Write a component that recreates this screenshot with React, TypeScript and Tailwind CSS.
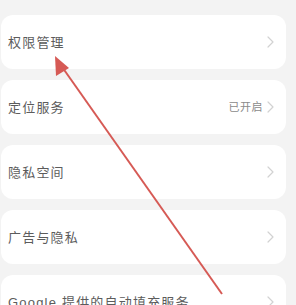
const rows: { label: string; value?: string }[] = [
  { label: '权限管理' },
  { label: '定位服务', value: '已开启' },
  { label: '隐私空间' },
  { label: '广告与隐私' },
  { label: 'Google 提供的自动填充服务' },
]

function Chevron() {
  return (
    <svg width="7" height="12" viewBox="0 0 7 12" fill="none" className="shrink-0">
      <path d="M1 1l5 5-5 5" stroke="#d2d2d2" strokeWidth="1.2" strokeLinecap="round" strokeLinejoin="round" />
    </svg>
  )
}

export default function App() {
  return (
    <div
      className="relative w-[296px] h-[305px] overflow-hidden bg-[#f3f3f3]"
      style={{ fontFamily: '"Liberation Sans", "Noto Sans CJK SC", sans-serif' }}
    >
      <div className="flex flex-col gap-[11px] pt-[15px] pl-[1px] pr-[10px]">
        {rows.map(r => (
          <div key={r.label} className="flex items-center h-[54px] rounded-[12px] bg-white pl-[7px] pr-[12px]">
            <span className="flex-1 pt-[2px] text-[13px] text-[#5c5c5c] tracking-[1.2px]">{r.label}</span>
            {r.value && <span className="text-[11px] text-[#8a8a8a] tracking-[0.5px] mr-[4px]">{r.value}</span>}
            <Chevron />
          </div>
        ))}
      </div>

      {/* annotation arrow */}
      <svg className="absolute inset-0 pointer-events-none" width="296" height="305" viewBox="0 0 296 305">
        <line x1="60" y1="64" x2="222" y2="294" stroke="#d65a55" strokeWidth="2" />
        <polygon points="55,56 56,76 69,68" fill="#d65a55" />
      </svg>
    </div>
  )
}
